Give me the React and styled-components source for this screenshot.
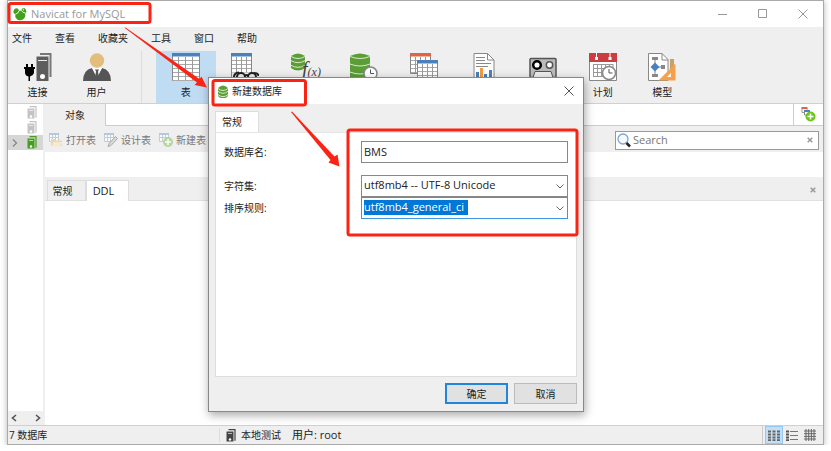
import React, { useState } from "react";
import styled, { createGlobalStyle } from "styled-components";

const tools = [
	{ name: "表", icon: TableIcon },
	{ name: "视图", icon: ViewIcon, iconOnly: true },
	{ name: "函数", icon: FunctionIcon, iconOnly: true },
	{ name: "事件", icon: EventIcon, iconOnly: true },
	{ name: "查询", icon: QueryIcon, iconOnly: true },
	{ name: "报表", icon: ReportIcon, iconOnly: true },
	{ name: "备份", icon: BackupIcon, iconOnly: true },
	{ name: "计划", icon: ScheduleIcon },
	{ name: "模型", icon: ModelIcon }
];

const menus = ["文件", "查看", "收藏夹", "工具", "窗口", "帮助"];

export default function App(){
	const [selectedTool, setSelectedTool] = useState("表");

	return(
		<>
			<GlobalStyle/>
			<Window>
				<TitleBar>
					<NavicatLogo/>
					<Title>Navicat for MySQL</Title>
					<WindowButtons>
						<WindowButton aria-label="最小化"><svg width="10" height="10"><path d="M0 5.5h9" stroke="#999"/></svg></WindowButton>
						<WindowButton aria-label="最大化"><svg width="10" height="10"><path d="M.5 .5h8v8h-8z" fill="none" stroke="#999"/></svg></WindowButton>
						<WindowButton aria-label="关闭"><svg width="10" height="10"><path d="M.5 .5l9 9M9.5 .5l-9 9" stroke="#999"/></svg></WindowButton>
					</WindowButtons>
				</TitleBar>
				<MenuBar>
					{menus.map(item=><MenuItem key={item}>{item}</MenuItem>)}
				</MenuBar>
				<ToolBar>
					<AccountTools>
						<Tool><ConnectionIcon/>连接</Tool>
						<Tool><UserIcon/>用户</Tool>
					</AccountTools>
					<ObjectTools>
						{tools.map(({ name, icon: Icon, iconOnly })=>
							<Tool key={name} aria-label={name} $selected={name === selectedTool} onClick={()=>setSelectedTool(name)}>
								<Icon/>{iconOnly?null:name}
							</Tool>
						)}
					</ObjectTools>
				</ToolBar>
				<Main>
					<Sidebar>
						<Tree>
							<TreeRow><span/><ServerIcon color="#c4c4c4"/></TreeRow>
							<TreeRow><span/><ServerIcon color="#c4c4c4"/></TreeRow>
							<TreeRow $selected>
								<svg width="6" height="8"><path d="M1 .5l3.500 3.500l-3.500 3.500" fill="none" stroke="#888" strokeWidth="1.300"/></svg>
								<ServerIcon color="#43a01c"/>
							</TreeRow>
						</Tree>
						<ScrollBar>
							<ScrollButton aria-label="向左"><svg width="6" height="8"><path d="M5 1l-3.500 3l3.500 3" fill="none" stroke="#555" strokeWidth="1.600"/></svg></ScrollButton>
							<ScrollButton aria-label="向右"><svg width="6" height="8"><path d="M1 1l3.500 3l-3.500 3" fill="none" stroke="#555" strokeWidth="1.600"/></svg></ScrollButton>
						</ScrollBar>
					</Sidebar>
					<Content>
						<ObjectTabs>
							<ObjectTab>对象</ObjectTab>
							<TabFiller/>
							<AddTab aria-label="新建标签"><AddTabIcon/></AddTab>
						</ObjectTabs>
						<ObjectBar>
							<ObjectActions>
								<ObjectAction><OpenTableIcon/>打开表</ObjectAction>
								<ObjectAction><DesignTableIcon/>设计表</ObjectAction>
								<ObjectAction><NewTableIcon/>新建表</ObjectAction>
							</ObjectActions>
							<SearchBox>
								<SearchIcon/>
								<SearchInput aria-label="Search" placeholder="Search"/>
								<ClearButton aria-label="清除"><CrossIcon/></ClearButton>
							</SearchBox>
						</ObjectBar>
						<ObjectList/>
						<DetailTabs>
							<DetailTab>常规</DetailTab>
							<DetailTab $active>DDL</DetailTab>
							<CloseDetail aria-label="关闭"><CrossIcon/></CloseDetail>
						</DetailTabs>
						<Detail/>
					</Content>
				</Main>
				<StatusBar>
					<DatabaseCount>7 数据库</DatabaseCount>
					<Connection>
						<ServerIcon color="#444"/>
						<span>本地测试</span>
						<span>用户: root</span>
					</Connection>
					<ViewButtons>
						<ViewButton $selected aria-label="列表"><svg width="12" height="11"><path d="M0 1.500h3M4.500 1.500h3M9 1.500h3M0 4.500h3M4.500 4.500h3M9 4.500h3M0 7.500h3M4.500 7.500h3M9 7.500h3M0 10.200h3M4.500 10.200h3M9 10.200h3" stroke="#666" strokeWidth="1.800"/></svg></ViewButton>
						<ViewButton aria-label="详细信息"><svg width="12" height="11"><path d="M0 1.500h3M0 4.500h3M0 7.500h3M0 10.200h3" stroke="#555" strokeWidth="1.800"/><path d="M4 1.500h8M4 5.500h8M4 9.500h8" stroke="#777"/></svg></ViewButton>
						<ViewButton aria-label="网格"><svg width="12" height="12"><path d="M0 2h12M0 4.700h12M0 7.400h12M0 10h12M2 0v12M4.700 0v12M7.400 0v12M10 0v12" stroke="#666"/></svg></ViewButton>
					</ViewButtons>
				</StatusBar>
			</Window>
			<NewDatabaseDialog/>
			<Marks/>
		</>
	);
}

function NewDatabaseDialog(){
	const [name, setName] = useState("BMS");

	return(
		<Dialog role="dialog" aria-labelledby="dialog-title">
			<DialogTitleBar>
				<DatabaseIcon/>
				<DialogTitle id="dialog-title">新建数据库</DialogTitle>
				<WindowButton aria-label="关闭"><svg width="10" height="10"><path d="M.5 .5l9 9M9.500 .5l-9 9" stroke="#555"/></svg></WindowButton>
			</DialogTitleBar>
			<DialogBody>
				<DialogTab>常规</DialogTab>
				<Panel>
					<Field $spaced>
						<label htmlFor="db-name">数据库名:</label>
						<TextInput id="db-name" value={name} onChange={e=>setName(e.target.value)}/>
					</Field>
					<Field>
						<label htmlFor="charset">字符集:</label>
						<SelectBox>
							<Select id="charset"><option>utf8mb4 -- UTF-8 Unicode</option></Select>
							<Chevron/>
						</SelectBox>
					</Field>
					<Field>
						<label htmlFor="collation">排序规则:</label>
						<SelectBox>
							<Select id="collation" $marked><option>utf8mb4_general_ci</option></Select>
							<Chevron/>
						</SelectBox>
					</Field>
				</Panel>
				<DialogButtons>
					<DialogButton $primary>确定</DialogButton>
					<DialogButton>取消</DialogButton>
				</DialogButtons>
			</DialogBody>
		</Dialog>
	);
}

function Marks(){
	return(
		<MarksLayer width="831" height="451" aria-hidden="true">
			<g fill="none" stroke="#fb2314" strokeWidth="3">
				<rect x="9" y="3.500" width="141" height="19" rx="2"/>
				<rect x="213" y="80.500" width="92.500" height="24.500" rx="2"/>
				<rect x="348" y="130" width="229" height="105" rx="2"/>
			</g>
			<g fill="#fb2314">
				<path d="M124.500 27.800L125.500 27.500L199.500 79L201.500 76.500L207 87.500L194.500 85L197 82.500Z"/>
				<path d="M291 112L292 111.500L334.500 156.500L337.500 154.500L339.500 166.500L328.500 162.500L330.500 160Z"/>
			</g>
		</MarksLayer>
	);
}

function NavicatLogo(){
	return(
		<svg width="14" height="14" viewBox="0 0 14 14">
			<path fill="#43a01c" d="M1.500 2Q4 .5 5.500 2.500L6 4Q7.500 3.200 8.500 3.500L9 1.500Q11 .3 12.500 2L13.500 5Q12.500 6.500 12 6.800Q13 9 11.500 11Q9.500 13.300 7 13.200Q4 13.200 2.500 10.500Q2 9 2.500 7.500Q.3 6.500 .3 4.500Z"/>
			<path fill="none" stroke="#fff" strokeWidth=".9" d="M2.500 7Q5 7 6 4M8.500 3.500Q9.500 6 12.500 6M10 1.500L10.500 3.500"/>
		</svg>
	);
}

function ConnectionIcon(){
	return(
		<svg width="28" height="28" viewBox="0 0 28 28">
			<path d="M16 1h10.500v23" fill="none" stroke="#777" strokeWidth="2"/>
			<path d="M12.500 3.500h12v24.500h-12z" fill="#5d5d5d"/>
			<path d="M14 7.500h9" stroke="#eee"/>
			<circle cx="18.500" cy="23.500" r="2.500" fill="#fff"/>
			<path d="M3 11v5M8 11v5" stroke="#000" strokeWidth="2"/>
			<path d="M0 14h11v2h-1v4q-1 3-4 3.500v4.500h-1.500v-4.500q-3-.5-3.500-3.500v-4h-1z"/>
		</svg>
	);
}

function UserIcon(){
	return(
		<svg width="28" height="28" viewBox="0 0 28 28">
			<circle cx="14" cy="7.500" r="7.200" fill="#e3bd7b"/>
			<path d="M0 28q0-11 9-13l5 8 5-8q9 2 9 13z" fill="#555"/>
			<path d="M9 15h10l-5 10z" fill="#fff"/>
			<path d="M12 16.500h4l-1 2 1 6-2 2-2-2 1-6z" fill="#555"/>
		</svg>
	);
}

function Grid({ x = 0, y = 0, width, height, columns, color = "#4a81bd" }){
	const rows = Math.floor((height - 4) / 4);
	return(
		<g transform={`translate(${x} ${y})`}>
			<path d={`M.5 .5h${width - 1}v${height - 1}h-${width - 1}z`} fill="#fff" stroke="#888"/>
			{Array.from({ length: rows }, (_, i)=>
				<path key={i} d={`M1 ${i * 4 + 7.5}h${width - 2}`} stroke="#aaa"/>
			)}
			{columns.map(c=><path key={c} d={`M${c} 4v${height - 5}`} stroke="#999"/>)}
			<path d={`M0 0h${width}v3.500h-${width}z`} fill={color}/>
		</g>
	);
}

function TableIcon(){
	return <svg width="28" height="28"><Grid width={28} height={28} columns={[6.5, 13.5, 20.5]}/></svg>;
}

function ViewIcon(){
	return(
		<svg width="28" height="28">
			<Grid width={21} height={28} columns={[5.5, 10.5, 15.5]}/>
			<path d="M1 19.500h27v8.500h-27z" fill="#efefef"/>
			<path d="M.5 19v2M20.500 18v2" stroke="#888"/>
			<g fill="none" stroke="#222" strokeWidth="2"><circle cx="10" cy="24" r="4"/><circle cx="21" cy="24" r="4"/><path d="M3 24q0-4 5-4.500M14 23q1.500-2 3 0M23 20q4.500 0 4.500 3"/></g>
		</svg>
	);
}

function Cylinder({ width, height }){
	return(
		<g>
			<path d={`M0 3q${width / 2}-5 ${width} 0v${height - 5}q-${width / 2} 5-${width} 0z`} fill="#5c9d37"/>
			<path d={`M0 3.500q${width / 2} 4 ${width} 0M0 ${height / 3 + 2}q${width / 2} 4 ${width} 0M0 ${height * 2 / 3 + 1}q${width / 2} 4 ${width} 0`} fill="none" stroke="#d5ebc6" strokeWidth="1"/>
		</g>
	);
}

function DatabaseIcon(){
	return <svg width="10" height="13"><Cylinder width={10} height={13}/></svg>;
}

function FunctionIcon(){
	return(
		<svg width="28" height="28" overflow="visible">
			<Cylinder width={14} height={17}/>
			<FunctionText x="11" y="23">f<tspan fontSize="12">(x)</tspan></FunctionText>
		</svg>
	);
}

function Clock({ x, y, r }){
	return(
		<g fill="none">
			<circle cx={x} cy={y} r={r} fill="#fff" stroke="#888" strokeWidth="1.500"/>
			<path d={`M${x} ${y - 4}v4h3.500`} stroke="#555"/>
		</g>
	);
}

function EventIcon(){
	return <svg width="28" height="28"><Cylinder width={20} height={27}/><Clock x={20.5} y={20.5} r={6.5}/></svg>;
}

function QueryIcon(){
	return(
		<svg width="28" height="28">
			<Grid width={21} height={21} columns={[5.5, 10.5, 15.5]} color="#dd6547"/>
			<Grid x={7} y={7} width={21} height={21} columns={[5.5, 10.5, 15.5]}/>
		</svg>
	);
}

function ReportIcon(){
	return(
		<svg width="28" height="28">
			<path d="M4 .5h13.500l6.500 6.500v20.500h-20z" fill="#fff" stroke="#888"/>
			<path d="M17.500 .5v6.500h6.500" fill="none" stroke="#888"/>
			<path d="M6 4.500h9M6 7.500h9M6 10.500h15M6 13.500h12" stroke="#888"/>
			<path d="M6 19h3v9h-3zM14 21h3v7h-3zM19 17h3v11h-3z" fill="#4a81bd"/>
			<path d="M10 15h3v13h-3z" fill="#f59a43"/>
		</svg>
	);
}

function BackupIcon(){
	return(
		<svg width="28" height="28">
			<rect x="1" y="5.500" width="26" height="19" rx="1" fill="#bbb" stroke="#555" strokeWidth="1.500"/>
			<circle cx="8" cy="12" r="3.800" fill="#fff" stroke="#000" strokeWidth="2.500"/>
			<circle cx="20.500" cy="12" r="3.200" fill="#fff" stroke="#555" strokeWidth="1.500"/>
			<path d="M6 18.500h16l2 6h-20z" fill="#eee" stroke="#555"/>
		</svg>
	);
}

function ScheduleIcon(){
	return(
		<svg width="28" height="28">
			<path d="M.5 .5h27v27h-27z" fill="#fff" stroke="#888"/>
			<path d="M0 0h28v9h-28z" fill="#cc3d3f"/>
			<path d="M7.500 0v5M21 0v5" stroke="#fff"/>
			<path d="M7.500 4v3M21 4v3" stroke="#fff" strokeWidth="3"/>
			<path d="M4 11.500h20M4 15.500h20M4 19.500h16M4 23.500h12M4.500 11v13M8.500 11v13M12.500 11v13M16.500 11v9M20.500 11v8M24 11v8" fill="none" stroke="#999"/>
			<Clock x={20} y={20} r={6.5}/>
		</svg>
	);
}

function ModelIcon(){
	return(
		<svg width="28" height="28">
			<path d="M.5 .5h13.500l6 6v21h-19.500z" fill="#fff" stroke="#888"/>
			<path d="M14 .5v6.500h6" fill="none" stroke="#888"/>
			<path d="M7 6v16M7 14h8" stroke="#888"/>
			<path d="M4 4h6v3h-6zM4 21h6v3h-6zM13 12h4v4h-4z" fill="#888"/>
			<path d="M7 9.500l4.500 4.500-4.500 4.500-4.500-4.500z" fill="#4a81bd"/>
			<path d="M22 6h4v12h-4z" fill="#c9a06a"/>
			<path d="M27.500 10.500v17h-17z" fill="#f7a04b"/>
			<path d="M23 20v4h-4z" fill="#fff"/>
		</svg>
	);
}

function ServerIcon({ color }){
	return(
		<svg width="10" height="13">
			<path d="M2.500 .7h6.500v11" fill="none" stroke={color} strokeWidth="1.200"/>
			<path d="M.5 2.500h7v10h-7z" fill={color}/>
			<path d="M2 4.500h4" stroke="#fff" opacity=".6"/>
			<circle cx="4" cy="10.500" r="1.200" fill="#fff"/>
		</svg>
	);
}

function FadedTable(){
	return <path d="M.5 .5h9v8h-9zM.5 4.500h9M3.500 1v7M6.500 1v7" fill="#fafafa" stroke="#c5ccd2"/>;
}

function OpenTableIcon(){
	return <svg width="14" height="14"><FadedTable/><path d="M0 0h10v2h-10z" fill="#b3c9e0"/><path d="M2 6h4l1 1.500h6v5.500h-11z" fill="#e7d8b8"/><path d="M4.500 9h9l-2 4.500h-9z" fill="#f5ead0"/></svg>;
}

function DesignTableIcon(){
	return <svg width="14" height="14"><FadedTable/><path d="M0 0h10v2h-10z" fill="#b3c9e0"/><path d="M4 13.500l1-3 6.500-7 2 2-6.500 7z" fill="#d8d8d8" stroke="#aaa"/></svg>;
}

function NewTableIcon(){
	return <svg width="14" height="14"><FadedTable/><path d="M0 0h10v2h-10z" fill="#b3c9e0"/><circle cx="9" cy="9" r="5" fill="#b4d6a0"/><path d="M6 9h6M9 6v6" stroke="#fff" strokeWidth="1.500"/></svg>;
}

function AddTabIcon(){
	return(
		<svg width="15" height="15">
			<path d="M1 1.500h5v4h-5z" fill="#fff" stroke="#999"/><path d="M.5 1h6" stroke="#dd6547" strokeWidth="2"/>
			<path d="M3.500 4h5v4h-5z" fill="#fff" stroke="#888"/><path d="M3 4h6" stroke="#4a81bd" strokeWidth="2"/>
			<circle cx="9.500" cy="9.500" r="5" fill="#6dc51b"/><path d="M6.500 9.500h6M9.500 6.500v6" stroke="#fff" strokeWidth="1.500"/>
		</svg>
	);
}

function SearchIcon(){
	return <svg width="14" height="15"><circle cx="6" cy="6" r="5" fill="#f5faff" stroke="#7ba6d3" strokeWidth="1.300"/><path d="M9.500 10l3.500 3.500" stroke="#222" strokeWidth="2.500"/></svg>;
}

function CrossIcon(){
	return <svg width="6" height="6"><path d="M.7 .7l4.600 4.600M5.300 .7l-4.600 4.600" stroke="#999" strokeWidth="1.500"/></svg>;
}

function Chevron(){
	return <svg width="8" height="5"><path d="M.5 .5l3.500 3.500 3.500-3.500" fill="none" stroke="#666"/></svg>;
}

const GlobalStyle = createGlobalStyle`
    * {
        box-sizing: border-box;
    }

    body {
        margin: 0;
        background: #fff;
    }

    body, button, input, select {
        font-family: "Open Sans", "Noto Sans CJK SC", sans-serif;
        font-size: 10px;
        line-height: 14px;
        color: #222;
    }

    button {
        border: 0;
        padding: 0;
        background: none;
    }

    svg {
        display: block;
        flex-shrink: 0;
    }
`;

const Window = styled.div`
    height: calc(100vh - 6px);
    margin: 0 7px;
    display: flex;
    flex-direction: column;
    background: #efefef;
    border: 1px solid #aaa;
    box-shadow: 0 1px 6px rgba(0, 0, 0, 0.3);
`;

const TitleBar = styled.header`
    height: 26px;
    display: flex;
    align-items: center;
    gap: 4px;
    padding-left: 5px;
    background: #fff;
`;

const Title = styled.h1`
    flex: 1;
    margin: 0;
    font-size: 11px;
    font-weight: 400;
    color: #999;
`;

const WindowButtons = styled.div`
    display: flex;
`;

const WindowButton = styled.button`
    width: 40px;
    height: 25px;
    display: flex;
    align-items: center;
    justify-content: center;
`;

const MenuBar = styled.nav`
    height: 24px;
    padding: 0 4px 2px;
    display: flex;
    align-items: center;
    gap: 23px;
`;

const MenuItem = styled.button`
`;

const ToolBar = styled.div`
    display: flex;
    border-bottom: 1px solid #d0d0d0;
`;

const AccountTools = styled.div`
    width: 134px;
    display: flex;
    border-right: 1px solid #ddd;
`;

const ObjectTools = styled.div`
    width: 536px;
    margin-left: 14px;
    display: grid;
    grid-template-columns: repeat(9, 1fr);
`;

const Tool = styled.button`
    min-width: 59px;
    height: 52px;
    padding-top: 2px;
    display: flex;
    flex-direction: column;
    align-items: center;
    gap: 4px;
    background: ${props=>props.$selected?"#c0dcf3":"transparent"};
`;

const FunctionText = styled.text`
    font-family: "Liberation Serif", serif;
    font-size: 20px;
    font-style: italic;
    fill: #444;
`;

const Main = styled.main`
    flex: 1;
    min-height: 0;
    display: flex;
`;

const Sidebar = styled.aside`
    width: 37px;
    display: flex;
    flex-direction: column;
`;

const Tree = styled.div`
    flex: 1;
    padding-top: 1px;
    margin-right: 2px;
    background: #fff;
`;

const TreeRow = styled.div`
    height: 15px;
    padding: 0 6px 0 4px;
    display: flex;
    align-items: center;
    justify-content: space-between;
    background: ${props=>props.$selected?"#d6d6d6":"transparent"};
`;

const ScrollBar = styled.div`
    height: 14px;
    padding: 0 4px 0 3px;
    display: flex;
    align-items: center;
    justify-content: space-between;
`;

const ScrollButton = styled.button`
`;

const Content = styled.section`
    flex: 1;
    display: flex;
    flex-direction: column;
`;

const ObjectTabs = styled.div`
    height: 22px;
    display: flex;
`;

const ObjectTab = styled.button`
    width: 60px;
`;

const TabFiller = styled.div`
    flex: 1;
    background: #fff;
    border-left: 1px solid #ccc;
    border-bottom: 1px solid #ccc;
`;

const AddTab = styled.button`
    width: 30px;
    display: flex;
    align-items: center;
    justify-content: center;
    background: #fff;
    border-left: 1px solid #ccc;
    border-bottom: 1px solid #ccc;
`;

const ObjectBar = styled.div`
    height: 26px;
    padding: 2px 4px 0;
    display: flex;
    align-items: center;
    justify-content: space-between;
`;

const ObjectActions = styled.div`
    display: flex;
    gap: 8px;
`;

const ObjectAction = styled.button`
    display: flex;
    align-items: center;
    gap: 3px;
    color: #777;
`;

const SearchBox = styled.div`
    width: 204px;
    height: 19px;
    padding: 0 5px 0 1px;
    display: flex;
    align-items: center;
    gap: 2px;
    background: #fff;
    border: 1px solid #999;
`;

const SearchInput = styled.input`
    flex: 1;
    min-width: 0;
    padding: 0;
    border: 0;
    outline: 0;
    background: transparent;
    font-size: 11px;

    &::placeholder {
        color: #777;
    }
`;

const ClearButton = styled.button`
`;

const ObjectList = styled.div`
    height: 25px;
    background: #fff;
`;

const DetailTabs = styled.div`
    height: 24px;
    padding: 3px 7px 0 2px;
    display: flex;
    align-items: center;
    border-bottom: 1px solid #e0e0e0;
`;

const DetailTab = styled.button`
    width: ${props=>props.$active?"43px":"39px"};
    height: 21px;
    padding-right: 8px;
    border: 1px solid #ddd;
    border-bottom: 0;
    font-size: ${props=>props.$active?"11px":"10px"};
    background: ${props=>props.$active?"#fff":"transparent"};
`;

const CloseDetail = styled.button`
    margin-left: auto;
`;

const Detail = styled.div`
    flex: 1;
    background: #fff;
`;

const StatusBar = styled.footer`
    height: 19px;
    display: flex;
    align-items: center;
    border-top: 1px solid #d0d0d0;
`;

const DatabaseCount = styled.div`
    width: 212px;
    padding-left: 1px;
    border-right: 1px solid #ddd;
`;

const Connection = styled.div`
    flex: 1;
    padding-left: 6px;
    display: flex;
    align-items: center;

    span {
        margin-left: 5px;
    }

    span + span {
        margin-left: 11px;
        font-size: 11px;
    }
`;

const ViewButtons = styled.div`
    padding: 0 4px 0 2px;
    display: flex;
    border-left: 1px solid #ccc;
`;

const ViewButton = styled.button`
    width: 18px;
    height: 18px;
    display: flex;
    align-items: center;
    justify-content: center;
    border: 1px solid ${props=>props.$selected?"#90c8f6":"transparent"};
    background: ${props=>props.$selected?"#c5def3":"transparent"};
`;

const Dialog = styled.div`
    position: absolute;
    top: 77px;
    left: 208px;
    width: 376px;
    background: #efefef;
    border: 1px solid #888;
    box-shadow: 1px 3px 9px rgba(0, 0, 0, 0.35);
`;

const DialogTitleBar = styled.div`
    height: 26px;
    padding-left: 9px;
    display: flex;
    align-items: center;
    background: #fff;

    button {
        width: 28px;
    }
`;

const DialogTitle = styled.h2`
    flex: 1;
    margin: 0 0 0 4px;
    font-size: 10px;
    font-weight: 400;
`;

const DialogBody = styled.div`
    padding: 7px 6px;
`;

const DialogTab = styled.button`
    width: 44px;
    height: 21px;
    display: block;
    padding-right: 10px;
    background: #fff;
    border: 1px solid #ddd;
    border-bottom: 0;
`;

const Panel = styled.div`
    height: 245px;
    padding: 8px 8px 0;
    background: #fff;
    border: 1px solid #ddd;
    border-top-color: #e6e6e6;
`;

const Field = styled.div`
    margin-bottom: ${props=>props.$spaced?"12px":"0"};
    display: grid;
    grid-template-columns: 1fr 207px;
    align-items: center;
`;

const TextInput = styled.input`
    height: 22px;
    padding: 0 2px 2px;
    border: 1px solid #888;
    border-radius: 0;
    font-size: 11px;
`;

const SelectBox = styled.div`
    display: grid;
    align-items: center;

    > * {
        grid-area: 1 / 1;
    }

    svg {
        justify-self: end;
        margin-right: 4px;
        pointer-events: none;
    }
`;

const Select = styled.select`
    width: 100%;
    height: 22px;
    padding: 0 2px 2px;
    appearance: none;
    border: 1px solid ${props=>props.$marked?"#3d97e0":"#888"};
    border-radius: 0;
    font-size: 11px;
    color: ${props=>props.$marked?"#fff":"#222"};
    background: ${props=>props.$marked?"linear-gradient(#0078d7, #0078d7) 2px 2px / 104px 15px no-repeat #fff":"#fff"};
`;

const DialogButtons = styled.div`
    padding-top: 6px;
    display: flex;
    justify-content: flex-end;
    gap: 6px;
`;

const DialogButton = styled.button`
    width: 63px;
    height: 21px;
    background: #e1e1e1;
    border: ${props=>props.$primary?"2px solid #2185d9":"1px solid #bbb"};
`;

const MarksLayer = styled.svg`
    position: absolute;
    top: 0;
    left: 0;
    pointer-events: none;
`;
